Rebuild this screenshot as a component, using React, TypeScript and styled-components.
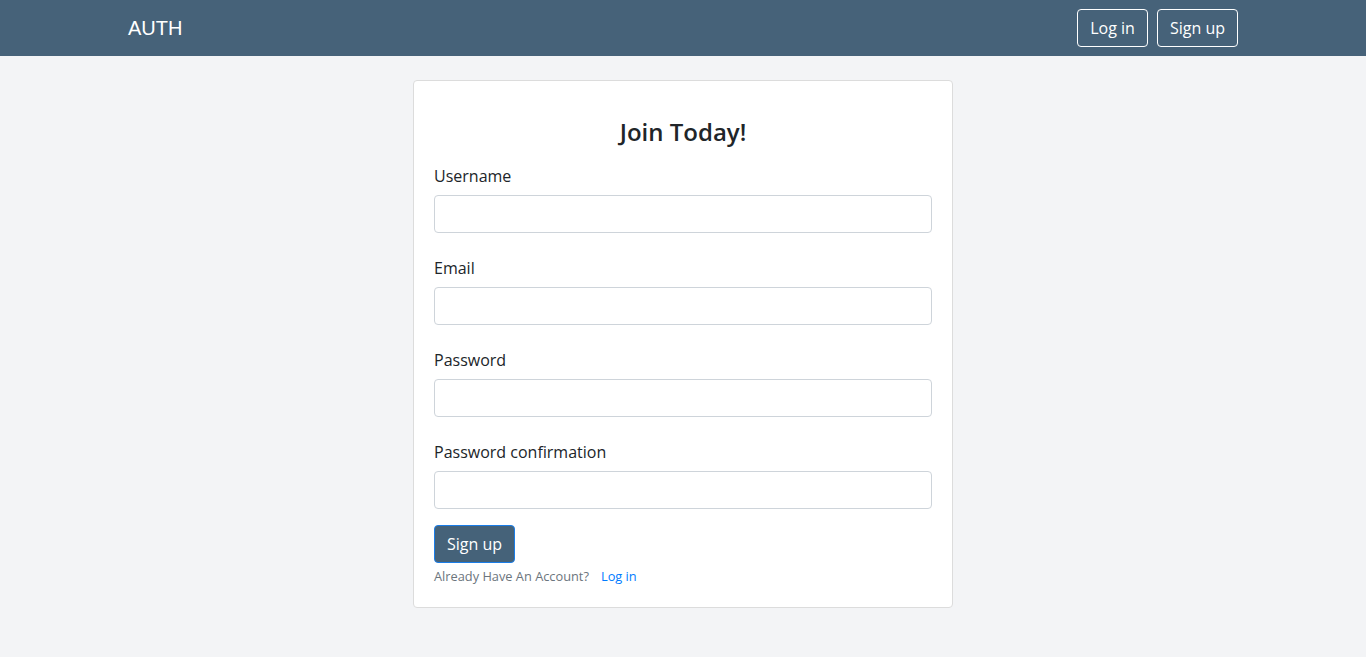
import React from "react";
import styled, { createGlobalStyle } from "styled-components";

const Global = createGlobalStyle`
  * { box-sizing: border-box; }
  html, body { margin: 0; padding: 0; }
  body {
    background: #f3f4f6;
    color: #212529;
    font-family: "Open Sans", sans-serif;
    font-size: 16px;
    line-height: 1.5;
  }
`;

const NavBar = styled.header`
  background: #466279;
  height: 56px;
`;

const NavInner = styled.div`
  width: 1140px;
  margin: 0 auto;
  padding: 0 15px;
  height: 100%;
  display: flex;
  align-items: center;
  justify-content: space-between;
`;

const Brand = styled.a`
  color: #fff;
  font-family: "Liberation Sans", Arial, sans-serif;
  font-size: 20px;
  text-decoration: none;
  line-height: 1;
`;

const NavActions = styled.div`
  display: flex;
  gap: 9px;
`;

const NavButton = styled.a`
  display: inline-block;
  color: #fff;
  border: 1px solid #fff;
  border-radius: 4px;
  padding: 6px 12px;
  font-size: 16px;
  line-height: 24px;
  text-decoration: none;
`;

const Main = styled.main`
  display: flex;
  justify-content: center;
  padding-top: 24px;
`;

const Card = styled.div`
  width: 540px;
  background: #fff;
  border: 1px solid #dcdcdc;
  border-radius: 4px;
  padding: 20px 20px 21px;
`;

const Title = styled.h2`
  margin: 16px 0 18px;
  font-size: 24px;
  font-weight: 600;
  line-height: 29px;
  text-align: center;
`;

const Fields = styled.div`
  display: flex;
  flex-direction: column;
  gap: 23px;
  margin-bottom: 16px;
`;

const Group = styled.div``;

const Label = styled.label`
  display: block;
  margin-bottom: 7px;
  line-height: 24px;
`;

const Input = styled.input`
  display: block;
  width: 100%;
  height: 38px;
  border: 1px solid #ced4da;
  border-radius: 4px;
  padding: 6px 12px;
  font-family: "Open Sans", sans-serif;
  font-size: 16px;
  background: #fff;
`;

const SubmitButton = styled.button`
  display: block;
  background: #456279;
  color: #fff;
  border: 1px solid #1a7de8;
  border-radius: 4px;
  height: 38px;
  padding: 0 12px;
  font-family: "Open Sans", sans-serif;
  font-size: 16px;
  line-height: 24px;
`;

const Footer = styled.div`
  margin-top: 3px;
  font-size: 12.8px;
  line-height: 20px;
  color: #6c757d;
`;

const FooterLink = styled.a`
  color: #007bff;
  text-decoration: none;
  margin-left: 12px;
`;

const fields = ["Username", "Email", "Password", "Password confirmation"];

export default function App() {
  return (
    <>
      <Global />
      <NavBar>
        <NavInner>
          <Brand href="#">AUTH</Brand>
          <NavActions>
            <NavButton href="#">Log in</NavButton>
            <NavButton href="#">Sign up</NavButton>
          </NavActions>
        </NavInner>
      </NavBar>
      <Main>
        <Card>
          <Title>Join Today!</Title>
          <Fields>
            {fields.map((f) => (
              <Group key={f}>
                <Label>{f}</Label>
                <Input type={f.startsWith("Password") ? "password" : "text"} />
              </Group>
            ))}
          </Fields>
          <SubmitButton>Sign up</SubmitButton>
          <Footer>
            Already Have An Account?
            <FooterLink href="#">Log in</FooterLink>
          </Footer>
        </Card>
      </Main>
    </>
  );
}
